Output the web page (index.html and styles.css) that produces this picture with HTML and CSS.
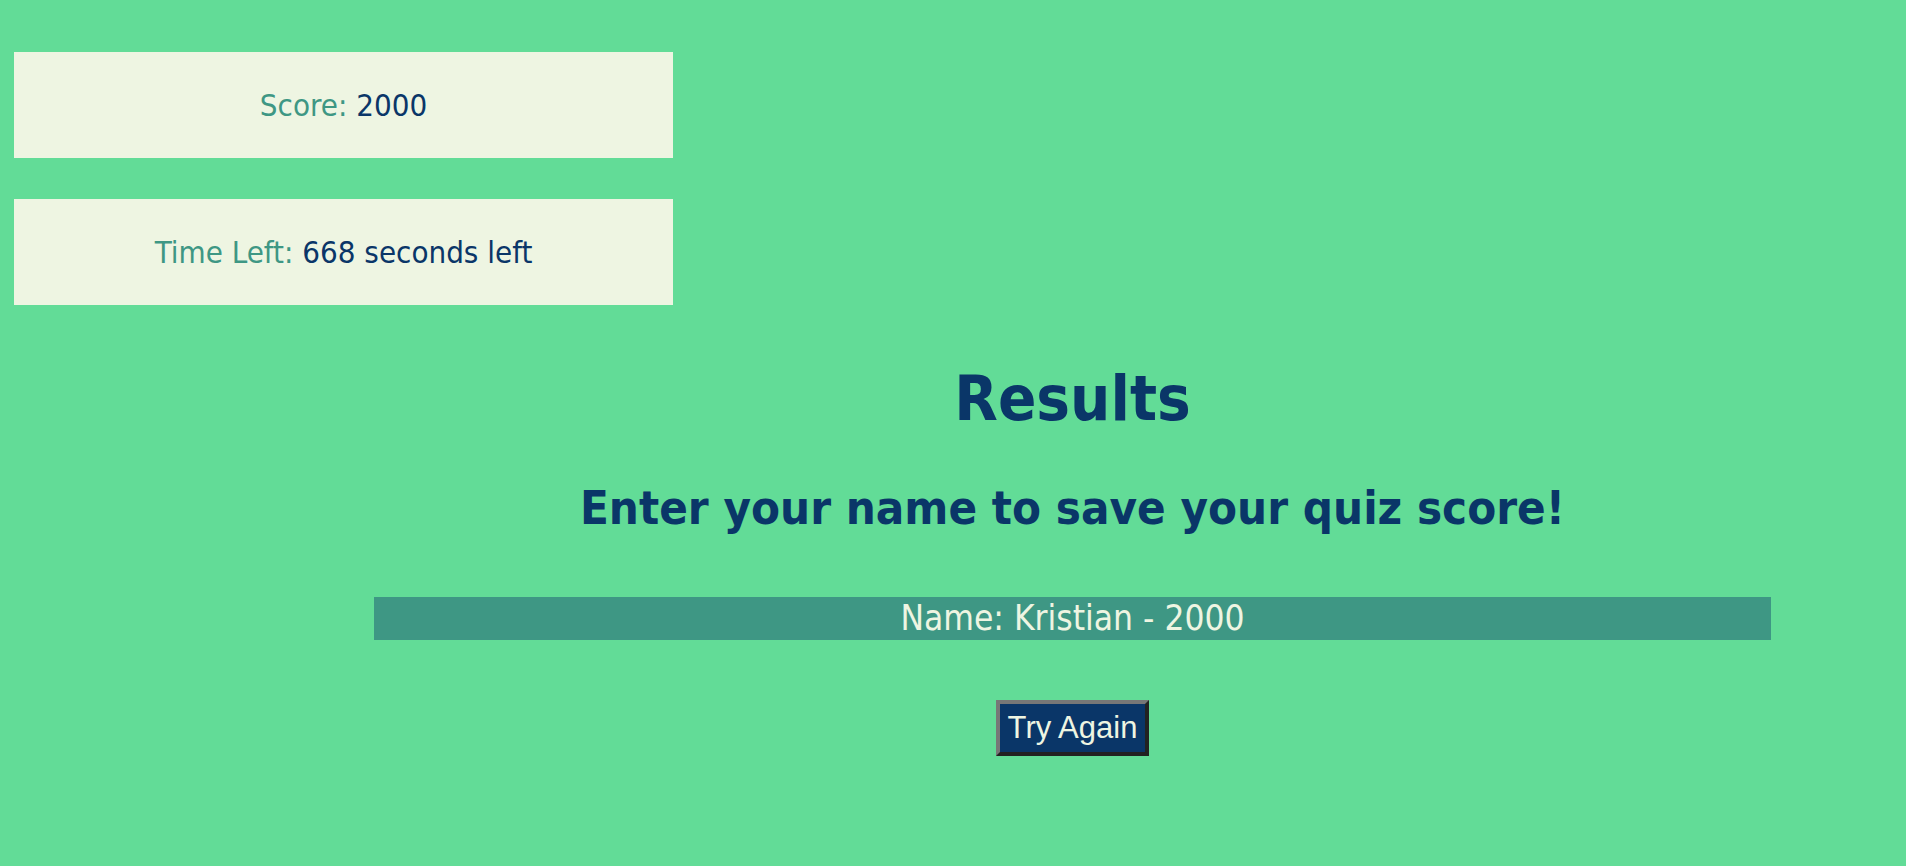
FILE: index.html
```html
<!DOCTYPE html>
<html lang="en">
<head>
<meta charset="utf-8">
<title>Quiz Results</title>
<link rel="stylesheet" href="styles.css">
</head>
<body>
<div class="page">
  <aside class="stats">
    <div class="stat"><span class="stat-label">Score:</span> <span class="stat-value">2000</span></div>
    <div class="stat"><span class="stat-label">Time Left:</span> <span class="stat-value">668 seconds left</span></div>
  </aside>
  <main class="results">
    <h1 class="results-title">Results</h1>
    <h2 class="results-sub">Enter your name to save your quiz score!</h2>
    <div class="name-bar">Name: Kristian - 2000</div>
    <div class="actions"><button class="try-btn" type="button">Try Again</button></div>
  </main>
</div>
</body>
</html>
```
FILE: styles.css
```css
html, body {
  margin: 0;
  padding: 0;
  background: #62dc97;
}
body {
  font-family: "DejaVu Sans Condensed", "DejaVu Sans", sans-serif;
  font-stretch: condensed;
  color: #0a3668;
}
.page {
  padding: 52px 0 0 14px;
}
.stats {
  display: flex;
  flex-direction: column;
  gap: 41px;
  width: 659px;
}
.stat {
  background: #eef5e2;
  text-align: center;
  font-size: 31px;
  line-height: 36px;
  padding: 35px 0;
}
.stat-label {
  color: #3e9784;
}
.stat-value {
  color: #0a3668;
}
.results {
  margin-left: 360px;
  width: 1397px;
  text-align: center;
}
.results-title {
  margin: 57px 0 0;
  font-size: 63px;
  line-height: 73px;
  font-weight: bold;
  color: #0a3668;
}
.results-sub {
  margin: 45px 0 0;
  font-size: 47px;
  line-height: 56px;
  font-weight: bold;
  color: #0a3668;
}
.name-bar {
  margin-top: 61px;
  background: #3e9784;
  color: #eef5e2;
  font-size: 35px;
  line-height: 43px;
  height: 43px;
}
.actions {
  margin-top: 60px;
}
.try-btn {
  font-family: "Liberation Sans", Arial, sans-serif;
  font-size: 31px;
  line-height: 36px;
  padding: 6px 8px;
  color: #eef5e2;
  background: #0a3668;
  border-width: 4px;
  border-style: solid;
  border-color: #777777 #222222 #222222 #777777;
  border-radius: 0;
  cursor: pointer;
}
```
